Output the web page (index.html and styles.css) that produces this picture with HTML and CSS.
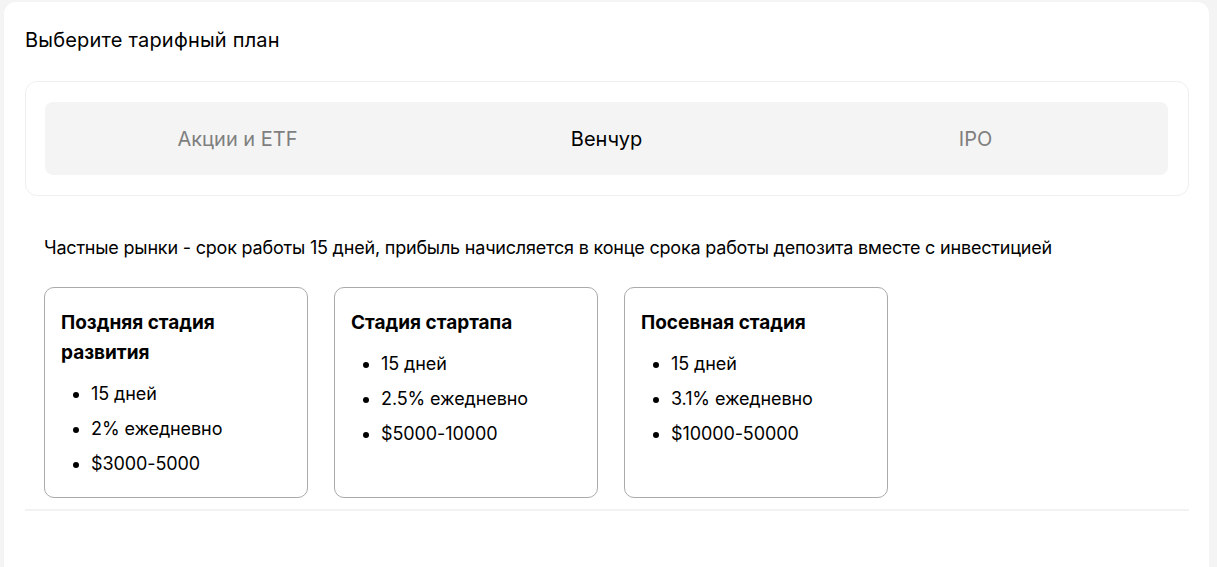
FILE: index.html
```html
<!DOCTYPE html>
<html lang="ru">
<head>
<meta charset="utf-8">
<title>Тарифный план</title>
<link rel="stylesheet" href="styles.css">
</head>
<body>
<main class="panel">
  <h1 class="title">Выберите тарифный план</h1>
  <section class="tabs-box">
    <div class="tabs">
      <div class="tab">Акции и ETF</div>
      <div class="tab active">Венчур</div>
      <div class="tab">IPO</div>
    </div>
  </section>
  <section class="content">
    <p class="desc">Частные рынки - срок работы 15 дней, прибыль начисляется в конце срока работы депозита вместе с инвестицией</p>
    <div class="cards">
      <div class="card">
        <h3 class="card-title">Поздняя стадия развития</h3>
        <ul class="card-list">
          <li>15 дней</li>
          <li>2% ежедневно</li>
          <li>$3000-5000</li>
        </ul>
      </div>
      <div class="card">
        <h3 class="card-title">Стадия стартапа</h3>
        <ul class="card-list">
          <li>15 дней</li>
          <li>2.5% ежедневно</li>
          <li>$5000-10000</li>
        </ul>
      </div>
      <div class="card">
        <h3 class="card-title">Посевная стадия</h3>
        <ul class="card-list">
          <li>15 дней</li>
          <li>3.1% ежедневно</li>
          <li>$10000-50000</li>
        </ul>
      </div>
    </div>
  </section>
</main>
</body>
</html>
```

FILE: styles.css
```css
* { box-sizing: border-box; }
html, body { margin: 0; padding: 0; }
body {
  background: #f4f4f4;
  font-family: Inter, "Noto Sans", sans-serif;
  color: #000;
  padding: 2px 8px 0 4px;
  height: 567px;
  overflow: hidden;
}
.panel {
  background: #fff;
  border-radius: 12px 12px 0 0;
  padding: 26px 20px 0 21px;
  height: 565px;
}
.title {
  margin: 0 0 29px;
  font-size: 20px;
  font-weight: 400;
  line-height: 24px;
  letter-spacing: 0.2px;
}
.tabs-box {
  border: 1px solid #efefef;
  border-radius: 12px;
  padding: 20px 20px 20px 19px;
}
.tabs {
  display: flex;
  background: #f4f4f4;
  border-radius: 8px;
  height: 73px;
  padding: 0 8px;
}
.tab {
  flex: 1;
  display: flex;
  align-items: center;
  justify-content: center;
  font-size: 20px;
  color: #7f7f7f;
}
.tab.active { color: #000; }
.content {
  padding: 0 20px 0 19px;
}
.desc {
  margin: 41px 0 28px;
  font-size: 18px;
  line-height: 22px;
  letter-spacing: -0.2px;
}
.cards {
  display: flex;
  gap: 26px;
  align-items: stretch;
}
.card {
  width: 264px;
  border: 1px solid #aaaaaa;
  border-radius: 10px;
  padding: 20px 16px 16px;
}
.card-title {
  margin: 0 0 8px;
  font-size: 19px;
  font-weight: 700;
  line-height: 30px;
}
.card-list {
  margin: 0;
  padding-left: 30px;
  font-size: 18px;
  line-height: 35px;
  letter-spacing: -0.1px;
}
.content::after {
  content: "";
  display: block;
  height: 2px;
  background: #f2f2f2;
  margin: 11px -20px 0 -19px;
}
```
